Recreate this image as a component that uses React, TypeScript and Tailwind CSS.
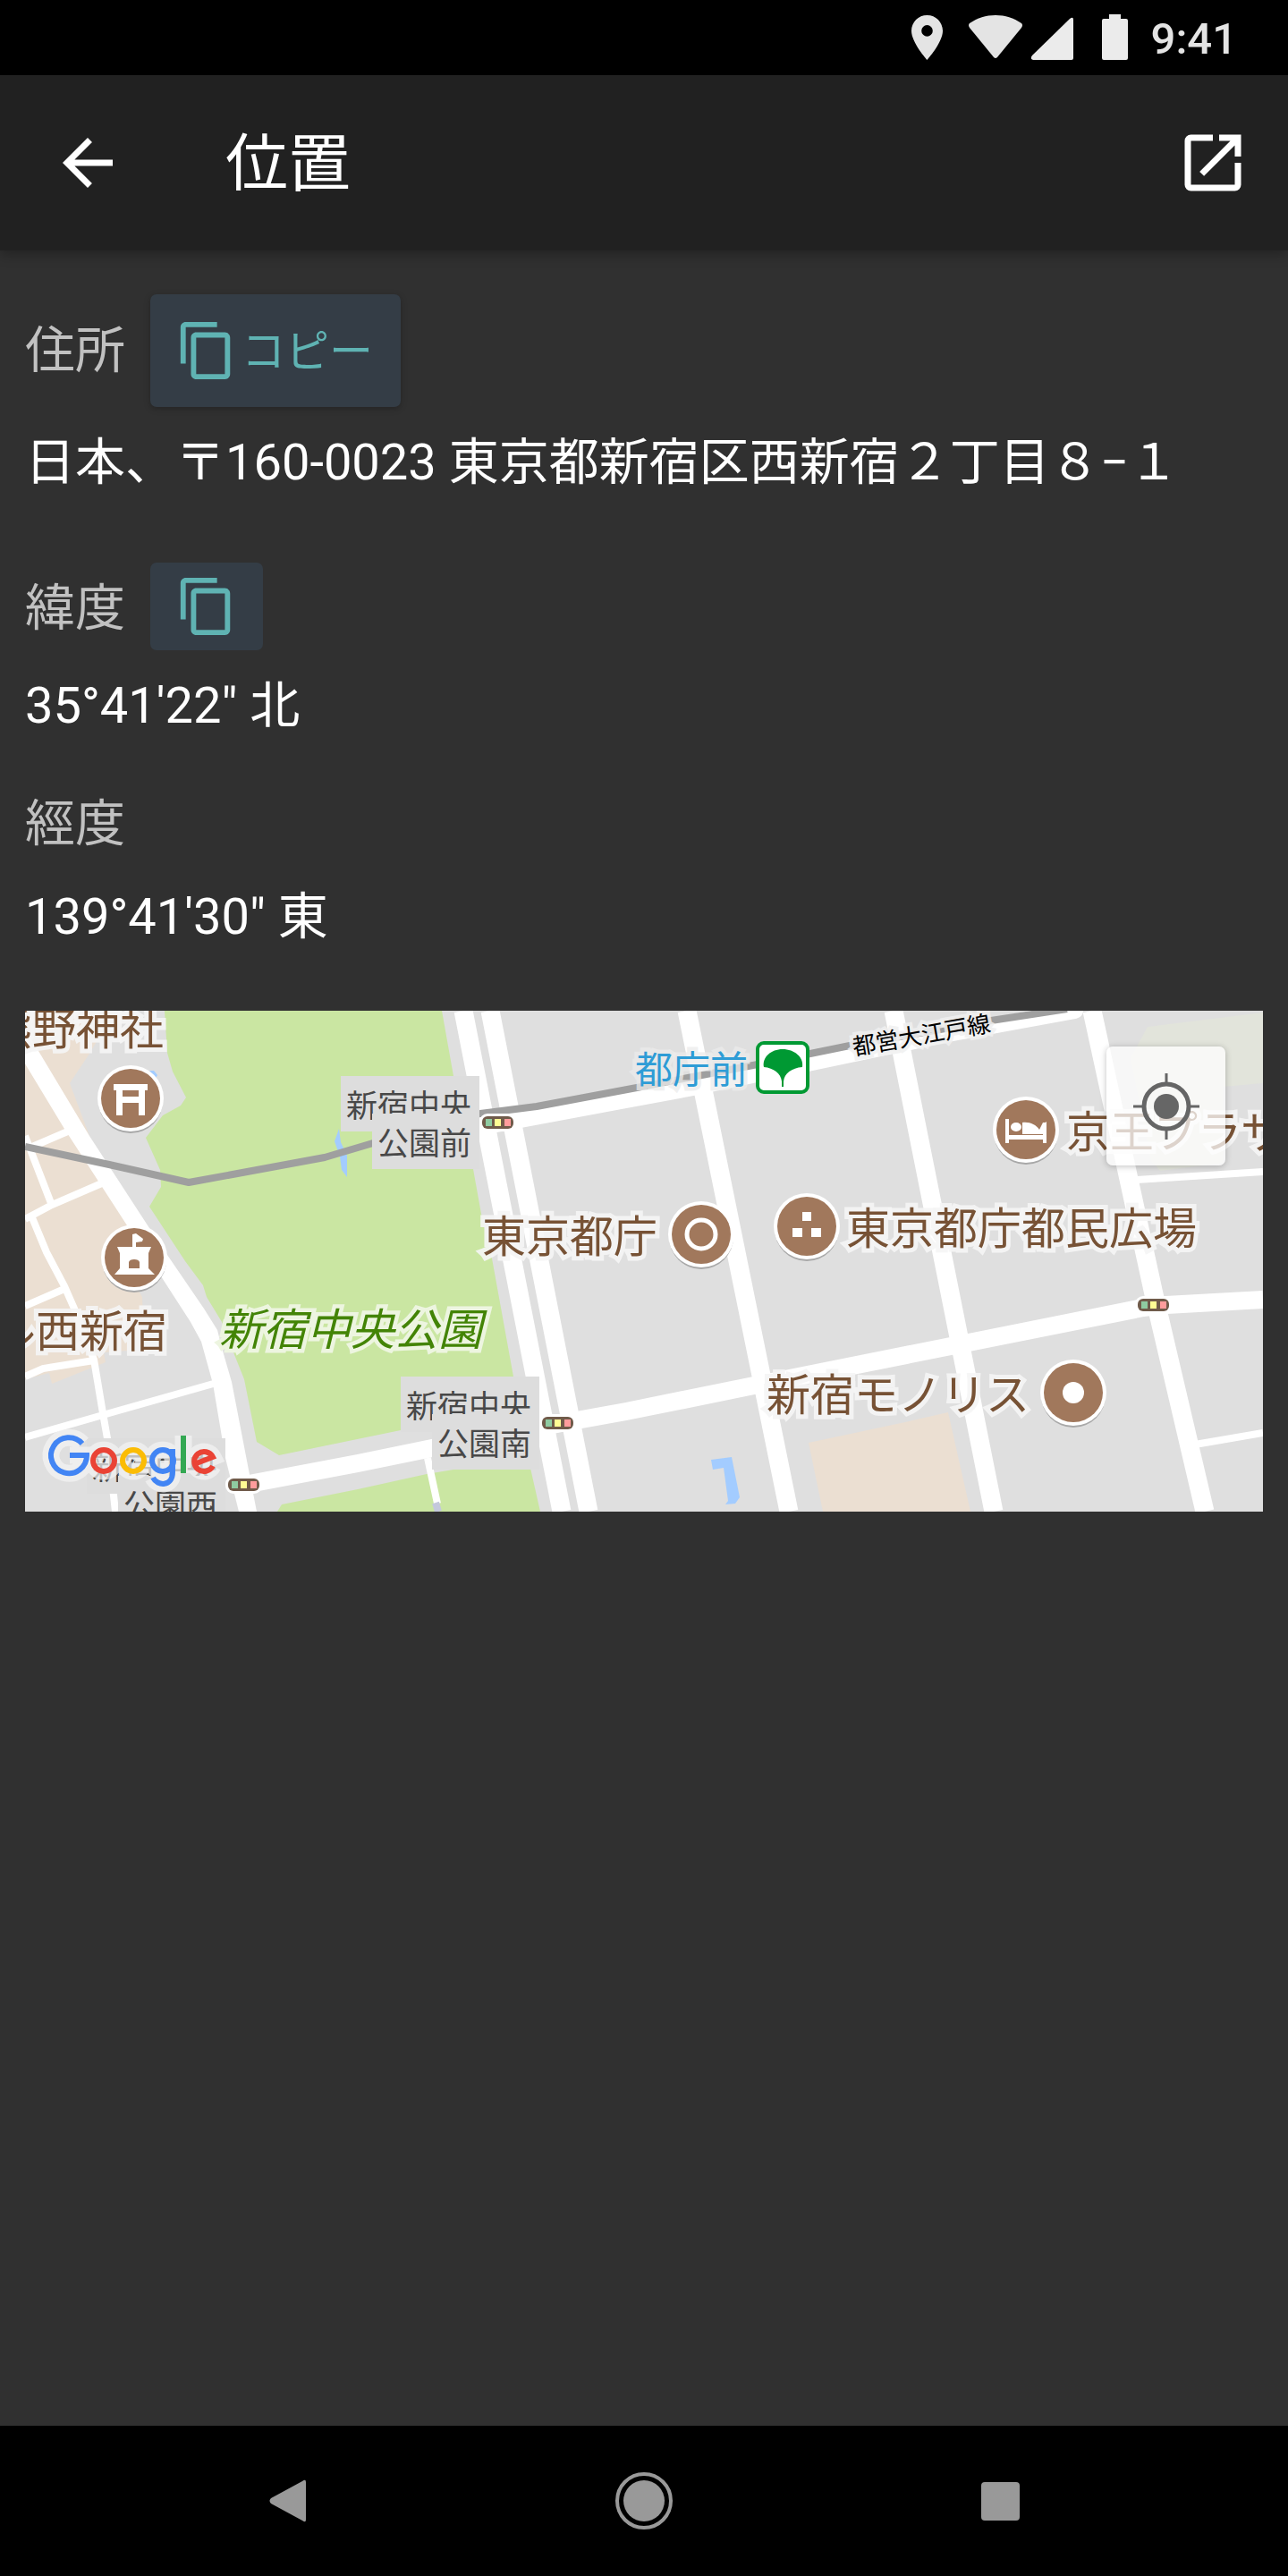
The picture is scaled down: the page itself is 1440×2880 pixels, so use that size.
import type { ReactNode } from "react";

function CopyIcon() {
  return (
    <svg viewBox="0 0 24 24" className="size-[70px] shrink-0" fill="currentColor" aria-hidden="true">
      <path d="M16 1H4c-1.1 0-2 .9-2 2v14h2V3h12V1zm3 4H8c-1.1 0-2 .9-2 2v14c0 1.1.9 2 2 2h11c1.1 0 2-.9 2-2V7c0-1.1-.9-2-2-2zm0 16H8V7h11v14z" />
    </svg>
  );
}

function StatusBar() {
  return (
    <div className="flex h-[84px] shrink-0 items-center justify-end bg-black pr-[57px] text-[#e4e4e4]">
      <svg viewBox="0 0 264 60" className="h-[60px] w-[264px]" aria-hidden="true">
        <path
          fill="#e4e4e4"
          d="M30.500 5C20.800 5 13 12.800 13 22.500 13 35.600 30.500 55 30.500 55S48 35.600 48 22.500C48 12.800 40.200 5 30.500 5zm0 23.700a6.300 6.300 0 1 1 0-12.600 6.300 6.300 0 0 1 0 12.600z"
        />
        <path fill="#e4e4e4" d="M78 14C87 8 96 5 107 5s20 3 29 9q2 2 0 5L109 52q-2 2-4 0L78 19q-2-3 0-5z" />
        <path fill="#ebebeb" d="M190 9q4-3 4 1V53q0 2-2 2H149q-4-1-1-5z" />
        <path fill="#ebebeb" d="M234 4h13v5h6q2 0 2 2v42q0 2-2 2h-25q-2 0-2-2V11q0-2 2-2h6z" />
      </svg>
      <span className="ml-[17px] pt-1 text-[49px] leading-[58px] font-medium">9:41</span>
    </div>
  );
}

function AppBar() {
  return (
    <header className="z-10 flex h-[196px] shrink-0 items-center bg-[#212121] pr-[42px] pl-[56px] shadow-[0_4px_14px_rgba(0,0,0,0.3)]">
      <button type="button" aria-label="戻る" className="size-[84px]">
        <svg viewBox="0 0 24 24" className="size-full" fill="currentColor" aria-hidden="true">
          <path d="M20 11H7.830l5.590-5.590L12 4l-8 8 8 8 1.410-1.410L7.830 13H20v-2z" />
        </svg>
      </button>
      <h1 className="ml-[112px] flex-1 pt-1 text-[70px] leading-[82px] font-normal">位置</h1>
      <button type="button" aria-label="外部アプリで開く" className="size-[84px]">
        <svg viewBox="0 0 24 24" className="size-full" fill="currentColor" aria-hidden="true">
          <path d="M14 3v2h3.590L7.760 14.830l1.410 1.410L19 6.410V10h2V3h-7zm5 16H5V5h7V3H5a2 2 0 0 0-2 2v14a2 2 0 0 0 2 2h14a2 2 0 0 0 2-2v-7h-2v7z" />
        </svg>
      </button>
    </header>
  );
}

function Pin({ x, y, children }: { x: number; y: number; children: ReactNode }) {
  return (
    <g transform={`translate(${x} ${y})`}>
      <circle cy="3" r="36" fill="#a8a8a8" />
      <circle r="37" fill="#fff" />
      <circle r="33" fill="#a1785c" />
      <g fill="#fff">{children}</g>
    </g>
  );
}

function Place({ x, y, children }: { x: number; y: number; children: string }) {
  return (
    <text
      x={x}
      y={y}
      className="text-[49px]"
      fill="#775235"
      stroke="#f5f5f5"
      strokeOpacity="0.9"
      strokeWidth="10"
      paintOrder="stroke"
    >
      {children}
    </text>
  );
}

function TrafficLight({ x, y }: { x: number; y: number }) {
  return (
    <g transform={`translate(${x} ${y})`}>
      <rect x="-3" y="-3" width="41" height="20" rx="9" fill="#fff" />
      <rect width="35" height="14" rx="6" fill="#705b4a" />
      <rect x="4" y="3" width="7" height="8" fill="#8fcba1" />
      <rect x="14" y="3" width="7" height="8" fill="#fffd94" />
      <rect x="25" y="3" width="7" height="8" fill="#ff9c9c" />
    </g>
  );
}

function Crossing({ x, y, name }: { x: number; y: number; name: string }) {
  return (
    <g transform={`translate(${x} ${y})`} fill="#484848" className="text-[35px]">
      <rect width="155" height="62" fill="#ddd" />
      <text x="6" y="46">
        新宿中央
      </text>
      <rect x="35" y="42" width="120" height="62" fill="#ddd" />
      <text x="41" y="88">
        {name}
      </text>
      <TrafficLight x={158} y={45} />
    </g>
  );
}

function LogoStrokes() {
  return (
    <>
      <path d="M64 484A20 20 0 1 0 69 497H50" stroke="#4285f4" />
      <circle cx="88" cy="503" r="12" stroke="#ea4335" />
      <circle cx="121" cy="503" r="12" stroke="#fbbc05" />
      <circle cx="154" cy="503" r="12" stroke="#4285f4" />
      <path d="M165 490V516C165 532 148 532 143 522" stroke="#4285f4" />
      <path d="M177 475V517" stroke="#34a853" />
      <path d="M189 507L210 499A11 11 0 1 0 210 509" stroke="#ea4335" />
    </>
  );
}

function MapDrawing() {
  return (
    <svg viewBox="0 0 1384 560" className="block w-full" role="img" aria-label="新宿中央公園周辺の地図">
      <rect width="1384" height="560" fill="#dfdfdf" />
      <path
        fill="#ebdfd2"
        d="M0 0H100L72 48 50 81 72 140 140 290 127 313 131 320 133 372 115 380 88 382 90 393 30 417 27 405 0 412zM876 483L984 460 1032 449 1057 560H892z"
      />
      <path
        fill="#cae6a2"
        d="M156 0L159 47 165 68 180 97 174 106 154 117 135 142 151 178 152 197 139 219 179 280 199 307 203 320 220 348 235 387 245 412 259 482 284 497 420 469 551 445 546 409 522 277 510 227 501 177 479 73 466 0zM282 560L287 552 372 535 449 518 479 513 562 498 576 560z"
      />
      <path fill="#e2e4db" d="M1255 18L1384 2V81L1339 85V170L1269 179 1259 168 1236 53z" />
      <path
        fill="#a3ccff"
        d="M351 132L346 146 352 163 354 178 360 186V162L353 147zM139 67H144L148 72 146 75zM767 502L790 499 799 544 794 551 783 552 786 548 781 511 769 513z"
      />

      <g fill="none" stroke="#fff">
        <path
          strokeWidth="8"
          d="M8 152L50 134M0 140L29 215M0 233L30 217 88 192M7 229L24 270 44 308 55 333 77 390 87 450 92 478 101 560M0 330L44 311M0 409L20 400 77 391M0 477L87 452 214 416M450 500L461 551M1243 189L1384 180M1308 485L1384 472"
        />
        <path strokeWidth="21" d="M490 0L600 560M520 0L630 560M740 0L854 560M971 0L1083 560M1193 0L1262 317 1319 560" />
        <path strokeWidth="20" d="M245 530L372 506 455 489 600 461 672 448 815 419 1035 375 1250 332 1276 329 1384 323" />
        <path strokeWidth="18" strokeLinecap="round" d="M522 128L672 100 747 86 1032 26 1174 0" />
      </g>
      <path
        fill="#fff"
        d="M-2 56L44 132 114 240 154 300 185 348 197 370 210 417 224 500 239 560H259L231 415 220 377 215 357 200 333 159 273 139 243 72 140 15 45-2 17z"
      />
      <path stroke="#c4c8dc" strokeWidth="8" d="M459 550L462 560" />
      <path
        fill="none"
        stroke="#9f9f9f"
        strokeWidth="8"
        strokeLinejoin="round"
        d="M0 152L94 172 183 192 335 164 389 148 509 115 572 107 684 86 819 60 922 39 1080 11 1165-2"
      />

      <Place x={-41} y={38}>熊野神社</Place>
      <Place x={-37} y={376}>ル西新宿</Place>
      <Place x={511} y={270}>東京都庁</Place>
      <Place x={918} y={261}>東京都庁都民広場</Place>
      <Place x={829} y={447}>新宿モノリス</Place>
      <Place x={1164} y={153}>京王プラザ</Place>
      <text
        x="217"
        y="374"
        className="text-[49px] italic"
        fill="#438406"
        stroke="#edf5e0"
        strokeWidth="9"
        paintOrder="stroke"
      >
        新宿中央公園
      </text>
      <text x="682" y="81" className="text-[42px]" fill="#2e9cd6" stroke="#ececec" strokeOpacity="0.75" strokeWidth="9" paintOrder="stroke">
        都庁前
      </text>
      <text
        x="927"
        y="50"
        transform="rotate(-10 927 50)"
        className="text-[26px]"
        fill="#000"
        stroke="#f0f0f0"
        strokeOpacity="0.85"
        strokeWidth="8"
        paintOrder="stroke"
      >
        都営大江戸線
      </text>

      <rect x="819" y="36" width="56" height="55" rx="7" fill="#fff" stroke="#093" strokeWidth="4" />
      <path fill="#093" d="M826 63C824 52 834 43 847 43S871 52 869 63C857 64 849 70 848 79V85H846V79C845 70 837 64 826 63z" />

      <Pin x={118} y={98}>
        <path d="M-19-16H19V-9H16V19H9V5H-9V19H-16V-9H-19zM-9-9V-2H9V-9z" fillRule="evenodd" />
      </Pin>
      <Pin x={122} y={276}>
        <path d="M-2-12V-26L2-27 10-21 9-18 2-17V-12H19L16-5V12L23 19H-22L-16 12V-5L-19-12zM-6 12H6V5Q5 2 0 2T-6 5z" fillRule="evenodd" />
      </Pin>
      <Pin x={756} y={250}>
        <circle r="16" fill="none" stroke="#fff" strokeWidth="5" />
      </Pin>
      <Pin x={874} y={241}>
        <path d="M-5-16H5V-6H-5zM-16 2H-5V12H-16zM5 2H16V12H5z" />
      </Pin>
      <Pin x={1119} y={133}>
        <path d="M-23-12H-19V6H19V-6L23-9V15H19V11H-19V15H-23zM-4-8C4-9 11-6 15 0L19-8H22V5H-4z" />
        <ellipse cx="-11" cy="-3" rx="6" ry="5" />
      </Pin>
      <Pin x={1172} y={427}>
        <circle r="12" />
      </Pin>

      <Crossing x={353} y={73} name="公園前" />
      <Crossing x={420} y={409} name="公園南" />
      <Crossing x={69} y={478} name="公園西" />
      <TrafficLight x={1244} y={322} />

      <g fill="none" strokeWidth="6" role="img" aria-label="Google">
        <mask id="logo-halo">
          <g className="[&>*]:stroke-white" strokeWidth="19">
            <LogoStrokes />
          </g>
        </mask>
        <rect x="10" y="460" width="220" height="85" fill="#f3f3f3" fillOpacity="0.7" mask="url(#logo-halo)" />
        <LogoStrokes />
      </g>
    </svg>
  );
}

function LocationMap() {
  return (
    <div className="relative mt-[71px] overflow-hidden">
      <MapDrawing />
      <button
        type="button"
        aria-label="現在地"
        className="absolute top-[40px] right-[42px] flex size-[133px] items-center justify-center rounded-[7px] bg-white/75 shadow-[0_1px_7px_rgba(0,0,0,0.25)]"
      >
        <svg viewBox="-37 -37 74 74" className="size-[74px]" fill="none" stroke="#666" aria-hidden="true">
          <circle r="25" strokeWidth="5" />
          <circle r="14" fill="#666" stroke="none" />
          <path strokeWidth="3" d="M0-37V-27M0 27V37M-37 0H-27M27 0H37" />
        </svg>
      </button>
    </div>
  );
}

function NavigationBar() {
  return (
    <nav className="flex h-[168px] shrink-0 items-center justify-center gap-[230px] bg-black text-[#999]">
      <button type="button" aria-label="戻る" className="flex size-[168px] items-center justify-center">
        <svg viewBox="0 0 42 48" className="h-[48px] w-[42px]" fill="currentColor" aria-hidden="true">
          <path d="M37 2q4-3 4 1V45q0 4-4 1L2 27q-3-3 0-6z" />
        </svg>
      </button>
      <button type="button" aria-label="ホーム" className="flex size-[168px] items-center justify-center">
        <svg viewBox="0 0 64 64" className="size-[64px]" aria-hidden="true">
          <circle cx="32" cy="32" r="30" fill="none" stroke="currentColor" strokeWidth="4" />
          <circle cx="32" cy="32" r="23" fill="currentColor" />
        </svg>
      </button>
      <button type="button" aria-label="アプリ履歴" className="flex size-[168px] items-center justify-center">
        <span className="size-[43px] rounded-[4px] bg-current" />
      </button>
    </nav>
  );
}

export default function App() {
  return (
    <div
      lang="ja"
      className="flex min-h-screen flex-col bg-[#303030] font-['Roboto','Noto_Sans_CJK_JP',sans-serif] text-white"
    >
      <StatusBar />
      <AppBar />
      <main className="flex-1 px-[28px] pt-[49px] text-[56px] leading-[68px]">
        <dl>
          <dt className="flex items-center gap-[28px] text-[#c1c1c1]">
            住所
            <button
              type="button"
              className="flex h-[126px] w-[280px] items-center gap-1 rounded-[7px] bg-[#343d46] pl-[28px] text-[49px] text-[#5fb3b3] shadow-[0_2px_7px_rgba(0,0,0,0.25)]"
            >
              <CopyIcon />
              <span className="pt-1">コピー</span>
            </button>
          </dt>
          <dd className="mt-[28px]">日本、〒160-0023 東京都新宿区西新宿２丁目８−１</dd>

          <dt className="mt-[78px] flex items-center gap-[28px] text-[#c1c1c1]">
            <span className="pt-1">緯度</span>
            <button
              type="button"
              aria-label="緯度をコピー"
              className="flex h-[98px] items-center rounded-[7px] bg-[#343d46] px-[28px] text-[#5fb3b3]"
            >
              <CopyIcon />
            </button>
          </dt>
          <dd className="mt-[28px]">35°41'22" 北</dd>

          <dt className="mt-[64px] text-[#c1c1c1]">經度</dt>
          <dd className="mt-[36px]">139°41'30" 東</dd>
        </dl>
        <LocationMap />
      </main>
      <NavigationBar />
    </div>
  );
}
